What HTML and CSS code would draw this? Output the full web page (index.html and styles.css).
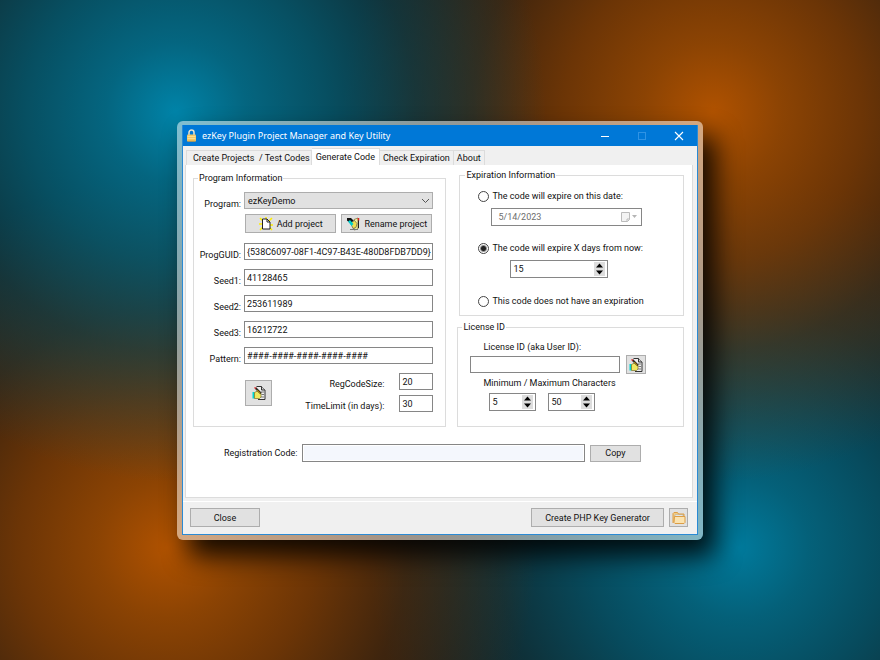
FILE: index.html
```html
<!DOCTYPE html>
<html lang="en">
<head>
<meta charset="utf-8">
<title>ezKey Plugin Project Manager and Key Utility</title>
<link rel="stylesheet" href="styles.css">
</head>
<body>
<svg class="defs" aria-hidden="true">
  <symbol id="edit-icon" viewBox="0 0 14 14">
    <path d="M4.500 .5h5l3.500 3.500v9.500h-7" fill="#eee" stroke="#333"/>
    <path d="M9.500 .5v3.500h3.500" fill="#ccc" stroke="#333"/>
    <path d="M9 6h3M9.500 8.500h2.500M9 11h3" stroke="#777"/>
    <path d="M.5 6h2v6.500h-2z" fill="#00d5d5"/>
    <path d="M2.500 6.500l3-1.500 3.500 2.500v3.500l-1.500 1.500h-5z" fill="#f0e860" stroke="#665c10" stroke-width=".6"/>
    <path d="M3.500 2l5.500 5.500" stroke="#222" stroke-width="2"/>
    <path d="M2.500 1.500l1.500 1" stroke="#d22" stroke-width="1.500"/>
    <path d="M5 3.800l3.500 3.500" stroke="#fb0" stroke-width=".8"/>
  </symbol>
  <symbol id="spin-up" viewBox="0 0 9 7"><path d="M1 5.500l3.500-4 3.500 4z" fill="#000"/></symbol>
  <symbol id="spin-down" viewBox="0 0 9 7"><path d="M1 1.500l3.500 4 3.500-4z" fill="#000"/></symbol>
</svg>
<main class="frame">
  <div class="window">
    <header class="titlebar">
      <svg class="lock" viewBox="0 0 11 13" aria-hidden="true">
        <path d="M3 6V3.500a2.500 2.500 0 0 1 5 0V6" fill="none" stroke="#e8e4d4" stroke-width="1.500"/>
        <rect x="1" y="5.500" width="9" height="7" rx="1" fill="#f3c765"/>
        <path d="M1.500 7.500h8M1.500 9.500h8" stroke="#ffe3a0" stroke-width=".8"/>
        <path d="M1.500 12.200h8" stroke="#c99035" stroke-width=".7"/>
      </svg>
      <h1>ezKey Plugin Project Manager and Key Utility</h1>
      <div class="caption">
        <button type="button" aria-label="Minimize"><svg viewBox="0 0 10 10"><path d="M1 5.500h8" stroke="#fff"/></svg></button>
        <button type="button" aria-label="Maximize" disabled><svg viewBox="0 0 10 10"><rect x="1.500" y="1.500" width="7" height="7" fill="none" stroke="#2f93e4"/></svg></button>
        <button type="button" aria-label="Close window"><svg viewBox="0 0 10 10"><path d="M1 1l8 8M9 1l-8 8" stroke="#fff" stroke-width="1.100"/></svg></button>
      </div>
    </header>

    <nav class="tabs" role="tablist">
      <button type="button" role="tab" class="tab">Create Projects&nbsp; / Test Codes</button>
      <button type="button" role="tab" class="tab tab-active" aria-selected="true">Generate Code</button>
      <button type="button" role="tab" class="tab">Check Expiration</button>
      <button type="button" role="tab" class="tab">About</button>
    </nav>

    <form class="panel">
      <div class="columns">
        <fieldset class="group program">
          <legend>Program Information</legend>
          <div class="row">
            <label for="program">Program:</label>
            <div class="select-wrap">
              <select id="program"><option>ezKeyDemo</option></select>
              <svg class="chevron" viewBox="0 0 9 6" aria-hidden="true"><path d="M1 1l3.500 3.500 3.500-3.500" fill="none" stroke="#555"/></svg>
            </div>
          </div>
          <div class="project-actions">
            <button type="button" class="btn">
              <svg class="icon" viewBox="0 0 14 14" aria-hidden="true">
                <path d="M1 1l3 3M13 1l-3 3M1 13l3-3M13 13l-3-3M7 0v3M0 7h3M14 8h-3" stroke="#ffee00" stroke-width="1.500"/>
                <path d="M3.500 2h4.500l3 3v7h-7.500z" fill="#fff" stroke="#222"/>
                <path d="M8 2v3h3" fill="none" stroke="#222"/>
              </svg>
              Add project
            </button>
            <button type="button" class="btn">
              <svg class="icon" viewBox="0 0 14 14" aria-hidden="true">
                <path d="M8 2.500l4-1.500v11l-4 1z" fill="#f8f3a0" stroke="#554f20" stroke-width=".6"/>
                <path d="M12.500 1v10" stroke="#222"/>
                <path d="M12.500 1v2.500" stroke="#d22" stroke-width="1.500"/>
                <path d="M4.500 6l4-2.500 2.500 3-1 4-3 1z" fill="#f2e050" stroke="#444" stroke-width=".6"/>
                <path d="M1 1h4l2.500 2.500-3 3-3.500-3z" fill="#111"/>
                <path d="M2 4.500l2-1.500 3.500 4-2 2z" fill="#00cfcf"/>
                <path d="M4 12.500h8" stroke="#777"/>
              </svg>
              Rename project
            </button>
          </div>
          <div class="row"><label for="guid">ProgGUID:</label><input class="field" id="guid" type="text" value="{538C6097-08F1-4C97-B43E-480D8FDB7DD9}"></div>
          <div class="row"><label for="seed1">Seed1:</label><input class="field" id="seed1" type="text" value="41128465"></div>
          <div class="row"><label for="seed2">Seed2:</label><input class="field" id="seed2" type="text" value="253611989"></div>
          <div class="row"><label for="seed3">Seed3:</label><input class="field" id="seed3" type="text" value="16212722"></div>
          <div class="row"><label for="pattern">Pattern:</label><input class="field" id="pattern" type="text" value="####-####-####-####-####"></div>
          <div class="limits">
            <button type="button" class="btn edit-large" aria-label="Edit pattern"><svg class="icon"><use href="#edit-icon"/></svg></button>
            <div class="limit-fields">
              <label for="size">RegCodeSize:</label><input class="field" id="size" type="text" value="20">
              <label for="limit">TimeLimit (in days):</label><input class="field" id="limit" type="text" value="30">
            </div>
          </div>
        </fieldset>

        <div class="side">
          <fieldset class="group expiration">
            <legend>Expiration Information</legend>
            <label class="radio"><input type="radio" name="expire"><span>The code will expire on this date:</span></label>
            <div class="date">
              <input type="text" aria-label="Expiration date" value="5/14/2023" disabled>
              <svg viewBox="0 0 18 12" aria-hidden="true">
                <path d="M1.500 1.500h8v7l-2 2h-6z" fill="#f3f3f3" stroke="#bbb"/>
                <path d="M9.500 8h-2.500v2.500" fill="none" stroke="#bbb"/>
                <path d="M12 4h5l-2.500 3z" fill="#b5b5b5"/>
              </svg>
            </div>
            <label class="radio"><input type="radio" name="expire" checked><span>The code will expire X days from now:</span></label>
            <div class="spin spin-days">
              <input type="text" inputmode="numeric" aria-label="Days from now" value="15">
              <span class="spin-buttons">
                <button type="button" aria-label="More days"><svg><use href="#spin-up"/></svg></button>
                <button type="button" aria-label="Fewer days"><svg><use href="#spin-down"/></svg></button>
              </span>
            </div>
            <label class="radio"><input type="radio" name="expire"><span>This code does not have an expiration</span></label>
          </fieldset>

          <fieldset class="group license">
            <legend>License ID</legend>
            <label class="caption-label" for="license">License ID (aka User ID):</label>
            <div class="license-row">
              <input class="field" id="license" type="text">
              <button type="button" class="btn" aria-label="Edit license ID"><svg class="icon"><use href="#edit-icon"/></svg></button>
            </div>
            <label class="caption-label" for="min">Minimum / Maximum Characters</label>
            <div class="range">
              <div class="spin">
                <input id="min" type="text" inputmode="numeric" value="5">
                <span class="spin-buttons">
                  <button type="button" aria-label="Raise minimum"><svg><use href="#spin-up"/></svg></button>
                  <button type="button" aria-label="Lower minimum"><svg><use href="#spin-down"/></svg></button>
                </span>
              </div>
              <div class="spin">
                <input type="text" inputmode="numeric" aria-label="Maximum characters" value="50">
                <span class="spin-buttons">
                  <button type="button" aria-label="Raise maximum"><svg><use href="#spin-up"/></svg></button>
                  <button type="button" aria-label="Lower maximum"><svg><use href="#spin-down"/></svg></button>
                </span>
              </div>
            </div>
          </fieldset>
        </div>
      </div>

      <div class="registration">
        <label for="code">Registration Code:</label>
        <input class="field" id="code" type="text" readonly>
        <button type="button" class="btn">Copy</button>
      </div>
    </form>

    <footer class="footer">
      <button type="button" class="btn close">Close</button>
      <button type="button" class="btn generate">Create PHP Key Generator</button>
      <button type="button" class="btn folder" aria-label="Open folder">
        <svg viewBox="0 0 14 14" aria-hidden="true">
          <path d="M1 12V2.500l1-1h3.500l1 1.500h5.500v2" fill="#f2cb83" stroke="#dc9d45"/>
          <path d="M3 4h8v2h-8z" fill="#fff" stroke="#9ab" stroke-width=".6"/>
          <path d="M2.500 5.500h10.500v6l-1 1h-9l-1-1z" fill="#fbe3b0" stroke="#dc9d45"/>
        </svg>
      </button>
    </footer>
  </div>
</main>
</body>
</html>
```
FILE: styles.css
```css
* { box-sizing: border-box; }

body {
  margin: 0;
  min-height: 100vh;
  padding: 121px 177px 120px;
  font: 9px/12px Roboto, "Liberation Sans", sans-serif;
  color: #111;
  background:
    radial-gradient(circle at 20% 17%, #0083a8 0, rgba(0, 116, 148, .84) 70px, rgba(0, 98, 124, .74) 150px, rgba(0, 80, 102, .46) 240px, transparent 370px),
    radial-gradient(circle at 81% 17%, #b05200 0, rgba(158, 74, 0, .86) 70px, rgba(136, 62, 0, .74) 150px, rgba(116, 52, 0, .4) 240px, transparent 370px),
    radial-gradient(circle at 19% 83%, #b05200 0, rgba(158, 74, 0, .86) 70px, rgba(136, 62, 0, .74) 150px, rgba(116, 52, 0, .4) 240px, transparent 370px),
    radial-gradient(circle at 84% 83%, #007a9c 0, rgba(0, 110, 140, .84) 70px, rgba(0, 92, 118, .74) 150px, rgba(0, 76, 98, .46) 240px, transparent 370px),
    #1a1a17;
}

button, input, select {
  margin: 0;
  font: inherit;
  color: inherit;
}

.defs { display: none; }

.frame {
  padding: 4px 5px 5px;
  border-radius: 6px;
  background: rgba(255, 255, 255, .5);
  box-shadow: 12px 16px 26px rgba(0, 0, 0, .85);
}

.window {
  border: 1px solid #2a8ad4;
  border-top: 0;
  background: #f0f0f0;
}

.titlebar {
  display: flex;
  align-items: center;
  gap: 5px;
  height: 21px;
  padding-left: 3px;
  background: #0078d7;
  color: #fff;
}

.titlebar h1 {
  flex: 1;
  margin: 0;
  font: 9px/12px "Noto Sans", sans-serif;
}

.lock { width: 11px; height: 13px; }
.caption { display: flex; }

.caption button {
  display: grid;
  place-items: center;
  width: 37px;
  height: 21px;
  padding: 0;
  border: 0;
  background: none;
}

.caption svg { width: 10px; height: 10px; }

.tabs {
  display: flex;
  align-items: flex-end;
  padding: 2px 3px 0;
}

.tab {
  height: 15px;
  padding: 0 3px;
  border: 1px solid #dcdcdc;
  border-width: 1px 1px 0 0;
  background: #f0f0f0;
  line-height: 13px;
}

.tab:first-child { border-left-width: 1px; padding: 0 1px 0 6px; }

.tab-active {
  height: 17px;
  padding: 0 4px;
  background: #fff;
}

.panel {
  margin: 0 4px 0 2px;
  padding: 7px 8px 35px 7px;
  border: 1px solid #dcdcdc;
  border-top: 0;
  background: #fff;
}

.columns {
  display: grid;
  grid-template-columns: 254fr 227fr;
  gap: 11px;
}

.group {
  min-width: 0;
  margin: 0;
  padding: 0;
  border: 1px solid #dcdcdc;
}

.group legend { padding: 0 1px; }

.program { padding: 8px 12px 14px 0; }
.program legend { margin-left: 4px; }

.row {
  display: flex;
  margin-bottom: 9px;
}

.row > label {
  width: 50px;
  padding: 7px 3px 0 0;
  line-height: 10px;
  text-align: right;
  white-space: nowrap;
}

.field {
  flex: 1;
  min-width: 0;
  height: 17px;
  padding: 0 1px 0 2px;
  border: 1px solid #868686;
  border-radius: 0;
  background: #fff;
}

.select-wrap { position: relative; flex: 1; }

.select-wrap select {
  display: block;
  appearance: none;
  width: 100%;
  height: 17px;
  padding: 0 3px;
  border: 1px solid #adadad;
  border-radius: 0;
  background: #e1e1e1;
}

.chevron {
  position: absolute;
  top: 6px;
  right: 3px;
  width: 9px;
  height: 6px;
}

.project-actions {
  display: grid;
  grid-template-columns: 1fr 1fr;
  gap: 5px;
  margin: -4px 1px 10px 51px;
}

.btn {
  display: flex;
  align-items: center;
  justify-content: center;
  gap: 4px;
  height: 19px;
  padding: 0;
  border: 1px solid #adadad;
  background: #e1e1e1;
  white-space: nowrap;
}

.icon { width: 14px; height: 14px; }

.limits {
  display: flex;
  justify-content: space-between;
  padding-left: 51px;
}

.edit-large {
  width: 27px;
  height: 26px;
  margin-top: 7px;
}

.limit-fields {
  display: grid;
  grid-template-columns: auto 34px;
  gap: 5px 15px;
}

.limit-fields label { padding-top: 5px; text-align: right; }

.side {
  display: flex;
  flex-direction: column;
  margin-top: -3px;
}

.expiration {
  height: 147px;
  margin-left: 2px;
  padding: 9px 0 0 18px;
}

.expiration legend { margin-left: -13px; }

.radio {
  display: flex;
  align-items: center;
  gap: 3px;
}

.radio input {
  appearance: none;
  width: 11px;
  height: 11px;
  border: 1px solid #444;
  border-radius: 50%;
  background: #fff;
}

.radio input:checked { background: radial-gradient(circle, #222 2px, transparent 4px); }

.date {
  display: flex;
  align-items: center;
  width: 151px;
  height: 18px;
  margin: 6px 0 16px 13px;
  padding-right: 3px;
  border: 1px solid #868686;
}

.date input {
  flex: 1;
  min-width: 0;
  padding: 0 6px;
  border: 0;
  background: none;
  color: #6d6d6d;
}

.date svg { width: 18px; height: 12px; }

.spin {
  display: flex;
  width: 47px;
  height: 18px;
  padding: 1px 2px;
  border: 1px solid #868686;
  background: #fff;
}

.spin input {
  flex: 1;
  min-width: 0;
  padding: 0;
  border: 0;
  background: none;
}

.spin-buttons { display: grid; gap: 0; }

.spin-buttons button {
  display: grid;
  width: 11px;
  height: 7px;
  padding: 0 1px;
  border: 0;
  background: #ddd;
}

.spin-buttons svg { width: 9px; height: 7px; }
.spin-days { width: 98px; margin: 6px 0 17px 32px; }

.license { padding: 8px 37px 15px 12px; margin-top: 5px; }
.license legend { margin-left: -8px; }
.caption-label { display: block; margin-left: 13px; }

.license-row {
  display: flex;
  align-items: center;
  gap: 6px;
  margin: 2px 0 3px;
}

.license-row .btn { width: 20px; }

.range {
  display: flex;
  gap: 12px;
  margin: 4px 0 0 19px;
}

.registration {
  display: flex;
  align-items: center;
  gap: 5px;
  margin: 17px 43px 0 31px;
}

.registration .field {
  height: 18px;
  background: #f4f7fd;
  box-shadow: inset 0 0 0 1px #fff;
}

.registration .btn { width: 51px; height: 17px; }

.footer {
  display: flex;
  gap: 5px;
  margin-top: 3px;
  padding: 6px 9px 7px 7px;
  border-top: 1px solid #fff;
}

.close { width: 70px; margin-right: auto; }
.generate { width: 133px; }
.folder { width: 19px; }
.folder svg { width: 14px; height: 14px; }
```
